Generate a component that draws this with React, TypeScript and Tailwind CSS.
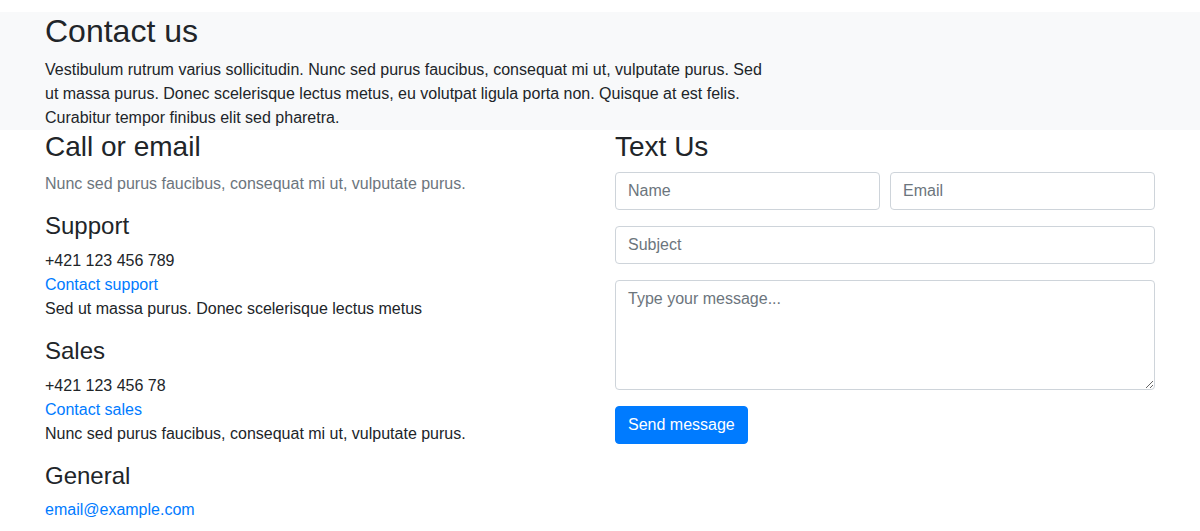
import React from "react";

const font = { fontFamily: '"Liberation Sans", Arial, sans-serif' };

const Block = ({
  title,
  phone,
  link,
  text,
}: {
  title: string;
  phone?: string;
  link: string;
  text?: string;
}) => (
  <div className="mb-4">
    <h4 className="mb-2 text-[24px] leading-[28.8px] font-medium">{title}</h4>
    {phone && <div className="text-[16px] leading-6">{phone}</div>}
    <a href="#" className="block text-[16px] leading-6 text-[#007bff]">
      {link}
    </a>
    {text && <div className="text-[16px] leading-6">{text}</div>}
  </div>
);

const inputCls =
  "w-full h-[38px] px-3 py-1.5 text-[16px] leading-6 text-[#495057] bg-white border border-[#ced4da] rounded-[4px] placeholder:text-[#6c757d] outline-none";

export default function App() {
  return (
    <div className="min-h-screen bg-white text-[#212529]" style={font}>
      <div className="mt-3 bg-[#f8f9fa]">
        <div className="mx-auto w-[1140px] px-[15px]">
          <h1 className="mb-2 text-[32px] leading-[38.4px] font-medium">Contact us</h1>
          <p className="max-w-[730px] text-[16px] leading-6">
            Vestibulum rutrum varius sollicitudin. Nunc sed purus faucibus, consequat mi ut,
            vulputate purus. Sed ut massa purus. Donec scelerisque lectus metus, eu volutpat
            ligula porta non. Quisque at est felis. Curabitur tempor finibus elit sed pharetra.
          </p>
        </div>
      </div>

      <div className="mx-auto w-[1140px] flex">
        <div className="w-1/2 px-[15px]">
          <h3 className="mb-2 text-[28px] leading-[33.6px] font-medium">Call or email</h3>
          <p className="mb-4 text-[16px] leading-6 text-[#6c757d]">
            Nunc sed purus faucibus, consequat mi ut, vulputate purus.
          </p>
          <Block
            title="Support"
            phone="+421 123 456 789"
            link="Contact support"
            text="Sed ut massa purus. Donec scelerisque lectus metus"
          />
          <Block
            title="Sales"
            phone="+421 123 456 78"
            link="Contact sales"
            text="Nunc sed purus faucibus, consequat mi ut, vulputate purus."
          />
          <Block title="General" link="email@example.com" />
        </div>

        <div className="w-1/2 px-[15px]">
          <h3 className="mb-2 text-[28px] leading-[33.6px] font-medium">Text Us</h3>
          <div className="mb-4 flex gap-[10px]">
            <input className={inputCls} placeholder="Name" />
            <input className={inputCls} placeholder="Email" />
          </div>
          <div className="mb-4">
            <input className={inputCls} placeholder="Subject" />
          </div>
          <div className="mb-4">
            <textarea
              rows={4}
              className="block w-full h-[110px] px-3 py-1.5 text-[16px] leading-6 text-[#495057] bg-white border border-[#ced4da] rounded-[4px] placeholder:text-[#6c757d] outline-none resize-y"
              placeholder="Type your message..."
            />
          </div>
          <button className="h-[38px] px-3 text-[16px] leading-6 text-white bg-[#007bff] rounded-[4px] border border-[#007bff]">
            Send message
          </button>
        </div>
      </div>
    </div>
  );
}
